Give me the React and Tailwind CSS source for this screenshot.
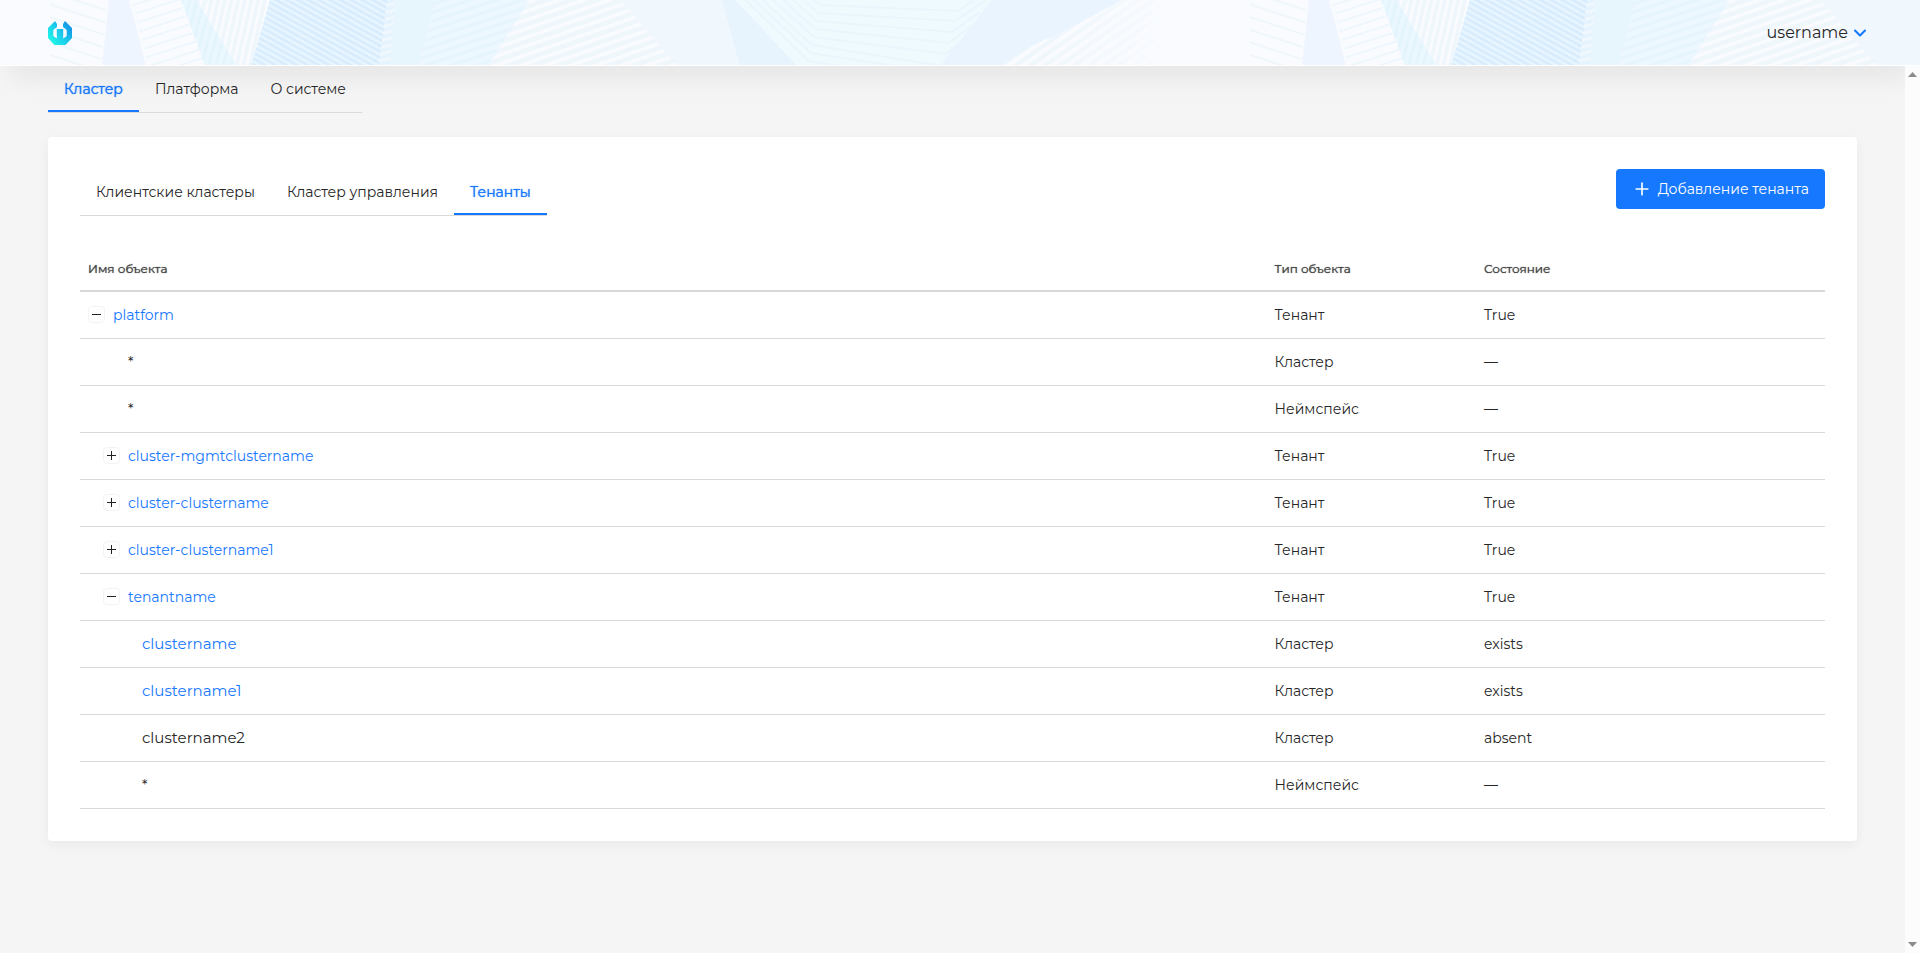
import { useState } from "react";
import { ChevronDown, Plus } from "lucide-react";

const mainTabs = ["Кластер", "Платформа", "О системе"];
const clusterTabs = ["Клиентские кластеры", "Кластер управления", "Тенанты"];

const rows = [
  { name: "platform", type: "Тенант", state: "True", level: 0, open: true, link: true },
  { name: "*", type: "Кластер", state: "—", level: 1 },
  { name: "*", type: "Неймспейс", state: "—", level: 1 },
  { name: "cluster-mgmtclustername", type: "Тенант", state: "True", level: 1, open: false, link: true },
  { name: "cluster-clustername", type: "Тенант", state: "True", level: 1, open: false, link: true },
  { name: "cluster-clustername1", type: "Тенант", state: "True", level: 1, open: false, link: true },
  { name: "tenantname", type: "Тенант", state: "True", level: 1, open: true, link: true },
  { name: "clustername", type: "Кластер", state: "exists", level: 2, link: true, large: true },
  { name: "clustername1", type: "Кластер", state: "exists", level: 2, link: true, large: true },
  { name: "clustername2", type: "Кластер", state: "absent", level: 2, large: true },
  { name: "*", type: "Неймспейс", state: "—", level: 2 },
];

const indents = ["pl-2", "pl-[23px]", "pl-[37px]"];

function Stripes({ id, step, thick, angle, base, color }) {
  return (
    <pattern id={id} width={step} height={step} patternUnits="userSpaceOnUse" patternTransform={`rotate(${angle})`}>
      <rect width={step} height={step} fill={base} />
      <rect width={step} height={thick} fill={color} />
    </pattern>
  );
}

function HeaderPattern() {
  return (
    <svg className="absolute inset-0 h-full w-full" aria-hidden="true">
      <defs>
        <Stripes id="s1" step={12} thick={1.6} angle={18} base="#fafbff" color="#ecf6fb" />
        <Stripes id="s2" step={9} thick={1.6} angle={-18} base="#fafbff" color="#eaf6fc" />
        <Stripes id="s3" step={7} thick={3} angle={-75} base="#ebf7fe" color="#e4f4fd" />
        <Stripes id="s4" step={6.5} thick={3} angle={-77} base="#eff7fc" color="#f9fbff" />
        <Stripes id="s5" step={5.2} thick={2.6} angle={29} base="#e7f5fe" color="#d8ecfe" />
        <Stripes id="s6" step={6.5} thick={3} angle={-14} base="#e4f3fe" color="#f0f8fe" />
        <Stripes id="s7" step={8} thick={3} angle={-18} base="#edf7ff" color="#e6f4fe" />
        <Stripes id="s8" step={8.2} thick={3.4} angle={-19} base="#eff7fc" color="#fafbff" />
        <Stripes id="s9" step={8.4} thick={4} angle={-35} base="#eff7fc" color="#fafbff" />
        <linearGradient id="fade" x1="1060" x2="1190" y1="0" y2="40" gradientUnits="userSpaceOnUse">
          <stop offset="0" stopColor="#fafbff" stopOpacity="0" />
          <stop offset="1" stopColor="#fafbff" />
        </linearGradient>
        <pattern id="tile" width="1200" height="66" patternUnits="userSpaceOnUse">
          <rect width="1200" height="66" fill="#fafbff" />
          <path d="M50 0H107L101 66H50Z" fill="url(#s1)" />
          <path d="M109 0H129L146 66H102Z" fill="#eff5ff" />
          <path d="M131 0H180L205 66H148Z" fill="url(#s2)" />
          <path d="M181 0H197L237 66H205Z" fill="url(#s3)" />
          <path d="M197 0H270L251 66H237Z" fill="url(#s4)" />
          <path d="M270 0H388L379 66H251Z" fill="url(#s5)" />
          <path d="M387 0H395L390 66H379Z" fill="url(#s6)" />
          <path d="M395 0H436L418 66H390Z" fill="#e7f5fd" />
          <path d="M435 0H530L488 66H418Z" fill="url(#s7)" />
          <path d="M530 0H620L678 66H488Z" fill="url(#s8)" />
          <path d="M620 0H723L741 66H678Z" fill="#f0f7fd" />
          <path d="M722 0H736L798 66H740Z" fill="#e7f4fd" />
          <path d="M735 0H992L940 66H797Z" fill="#effaff" />
          <g fill="none" stroke="#e7f5fc" strokeWidth="1.6">
            <path d="M814 0L820 5L958 11L974 0" />
            <path d="M804 0L818 13L955 21L986 0" />
            <path d="M793 0L817 21L952 32L980 12" />
            <path d="M783 0L815 29L949 43L970 27" />
            <path d="M773 0L814 37L946 54L960 43" />
            <path d="M763 0L812 45L942 66" />
            <path d="M754 0L811 53L895 66" />
            <path d="M745 0L809 61L840 66" />
          </g>
          <path d="M992 0H1122L1000 66H940Z" fill="#e9f4fe" />
          <path d="M1122 0H1190V66H1000Q1030 44 1060 34Z" fill="url(#s9)" />
          <path d="M1122 0H1190V66H1000Q1030 44 1060 34Z" fill="url(#fade)" />
        </pattern>
      </defs>
      <rect width="100%" height="100%" fill="url(#tile)" />
    </svg>
  );
}

function Logo() {
  return (
    <svg viewBox="0 0 24 24" className="size-6" aria-hidden="true">
      <defs>
        <linearGradient id="logo" x1="3" y1="21" x2="22" y2="6" gradientUnits="userSpaceOnUse">
          <stop offset="0" stopColor="#1ef7e8" />
          <stop offset="0.5" stopColor="#1ccdea" />
          <stop offset="1" stopColor="#1398e8" />
        </linearGradient>
      </defs>
      <path
        d="M7 0L0 7V17L6.5 24H17.5L24 17V7L17 0L15 3V6L18.7 9V15L15.2 17.5V8H8.8V17.5L5.3 15V9L9 6V3Z"
        fill="url(#logo)"
      />
    </svg>
  );
}

function Tabs({ items, active, onChange }) {
  return (
    <div role="tablist" className="flex border-b border-[#d9d9d9]">
      {items.map((t) => (
        <button
          key={t}
          role="tab"
          aria-selected={t === active}
          onClick={() => onChange(t)}
          className={
            t === active
              ? "h-[46px] border-b-2 border-[#1677ff] px-4 pt-[2px] text-[#1677ff] [text-shadow:0_0_1px_currentColor]"
              : "h-[46px] px-4"
          }
        >
          {t}
        </button>
      ))}
    </div>
  );
}

function Row({ row }) {
  const [open, setOpen] = useState(row.open);
  const expandable = row.open !== undefined;
  return (
    <tr className="h-[47px] border-b border-[#d9d9d9]">
      <td className={indents[row.level]}>
        <div className="flex items-center gap-2">
          {expandable ? (
            <button
              aria-label={open ? "Свернуть" : "Развернуть"}
              onClick={() => setOpen(!open)}
              className="flex size-[17px] items-center justify-center rounded border border-[#f3f3f3]"
            >
              <svg viewBox="0 0 9 9" className="size-[9px]" fill="#222222">
                <path d="M0 4h9v1H0z" />
                {!open && <path d="M4 0h1v9H4z" />}
              </svg>
            </button>
          ) : (
            <span className="w-[17px]" />
          )}
          {row.link ? (
            <a href="#" className={row.large ? "text-[15px] text-[#1677ff]" : "text-[#1677ff]"}>{row.name}</a>
          ) : (
            <span className={row.large ? "text-[15px]" : ""}>{row.name}</span>
          )}
        </div>
      </td>
      <td className="px-2">{row.type}</td>
      <td className="px-2">{row.state}</td>
    </tr>
  );
}

export default function App() {
  const [mainTab, setMainTab] = useState("Кластер");
  const [clusterTab, setClusterTab] = useState("Тенанты");
  return (
    <div className="flex min-h-screen flex-col bg-[#f5f5f5] font-['Montserrat',sans-serif] text-sm text-[#262626]">
      <header className="relative z-10 flex h-[66px] items-center justify-between border-b border-white pr-[50px] pl-12 shadow-[0_24px_24px_-10px_rgba(0,0,0,0.06)]">
        <HeaderPattern />
        <a href="#" aria-label="Главная" className="relative">
          <Logo />
        </a>
        <button className="relative flex items-center gap-[2px] text-base">
          username
          <ChevronDown className="size-5 text-[#1677ff]" strokeWidth={2.5} />
        </button>
      </header>

      <div className="flex flex-1">
        <main className="flex-1 px-12">
          <nav className="flex">
            <Tabs items={mainTabs} active={mainTab} onChange={setMainTab} />
          </nav>

          <section className="mt-6 rounded bg-white p-8 shadow-[0_4px_12px_rgba(0,0,0,0.05)]">
            <div className="flex items-start justify-between">
              <Tabs items={clusterTabs} active={clusterTab} onChange={setClusterTab} />
              <button className="flex h-10 items-center gap-[6px] rounded bg-[#1677ff] px-4 text-white">
                <Plus className="size-5" strokeWidth={2} />
                Добавление тенанта
              </button>
            </div>

            <table className="mt-8 w-full table-fixed border-collapse text-left">
              <thead>
                <tr className="h-[43px] border-b-2 border-[#d9d9d9] text-xs text-[#434343]">
                  <th className="w-[68%] px-2 font-normal [text-shadow:0_0_1px_currentColor]">Имя объекта</th>
                  <th className="w-[12%] px-2 font-normal [text-shadow:0_0_1px_currentColor]">Тип объекта</th>
                  <th className="w-[20%] px-2 font-normal [text-shadow:0_0_1px_currentColor]">Состояние</th>
                </tr>
              </thead>
              <tbody>
                {rows.map((r, i) => (
                  <Row key={i} row={r} />
                ))}
              </tbody>
            </table>
          </section>
        </main>

        <div aria-hidden="true" className="relative z-20 flex w-[15px] flex-col items-center justify-between bg-[#fcfcfc] py-[6px]">
          <svg viewBox="0 0 9 5" className="h-[5px] w-[9px]" fill="#8b8b8b">
            <path d="M4.5 0L9 5H0z" />
          </svg>
          <svg viewBox="0 0 9 5" className="h-[5px] w-[9px]" fill="#8b8b8b">
            <path d="M0 0h9L4.5 5z" />
          </svg>
        </div>
      </div>
    </div>
  );
}
